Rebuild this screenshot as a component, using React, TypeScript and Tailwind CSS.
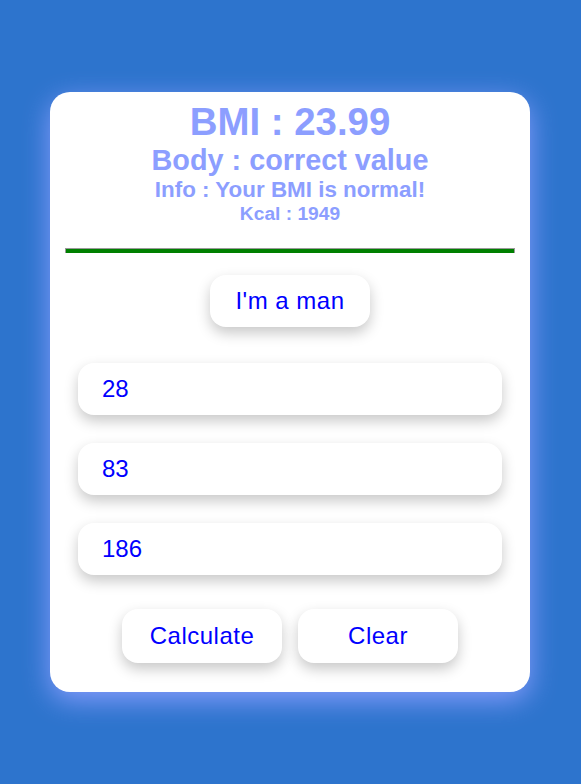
import { useState } from 'react';

export default function App() {
  const [age, setAge] = useState('28');
  const [weight, setWeight] = useState('83');
  const [height, setHeight] = useState('186');

  const fields = [
    { value: age, set: setAge },
    { value: weight, set: setWeight },
    { value: height, set: setHeight },
  ];

  return (
    <div className="min-h-screen flex items-center justify-center pr-px bg-[#2d74cd] font-['Liberation_Sans',Arial,sans-serif]">
      <div className="w-[480px] h-[600px] rounded-[20px] bg-white pt-2 px-[15px] shadow-[0_8px_28px_rgba(140,158,255,0.95)]">
        <div className="text-center font-bold text-[#8c9eff] leading-[1.149]">
          <div className="text-[38.4px]">BMI : 23.99</div>
          <div className="text-[28.8px]">Body : correct value</div>
          <div className="text-[22.4px]">Info : Your BMI is normal!</div>
          <div className="text-[19.2px]">Kcal : 1949</div>
        </div>

        <div className="mt-[23px] h-[5px] bg-[#008000] border border-b-0 border-[#9a9a9a]" />

        <div className="flex justify-center mt-[22px]">
          <button className="w-[160px] h-[52px] rounded-[16px] bg-white text-[24px] tracking-[0.5px] text-[#0000ff] shadow-[0_6px_14px_rgba(0,0,0,0.22)]">
            I'm a man
          </button>
        </div>

        <div className="mt-[36px] px-[13px] flex flex-col gap-[28px]">
          {fields.map((f, i) => (
            <input
              key={i}
              type="text"
              value={f.value}
              onChange={(e) => f.set(e.target.value)}
              className="w-full h-[52px] rounded-[16px] bg-white pl-[24px] text-[24px] text-[#0000ff] outline-none shadow-[0_6px_14px_rgba(0,0,0,0.22)]"
            />
          ))}
        </div>

        <div className="mt-[34px] flex justify-center gap-4">
          <button className="w-[160px] h-[54px] rounded-[16px] bg-white text-[24px] tracking-[0.5px] text-[#0000ff] shadow-[0_6px_14px_rgba(0,0,0,0.22)]">
            Calculate
          </button>
          <button className="w-[160px] h-[54px] rounded-[16px] bg-white text-[24px] tracking-[0.5px] text-[#0000ff] shadow-[0_6px_14px_rgba(0,0,0,0.22)]">
            Clear
          </button>
        </div>
      </div>
    </div>
  );
}
